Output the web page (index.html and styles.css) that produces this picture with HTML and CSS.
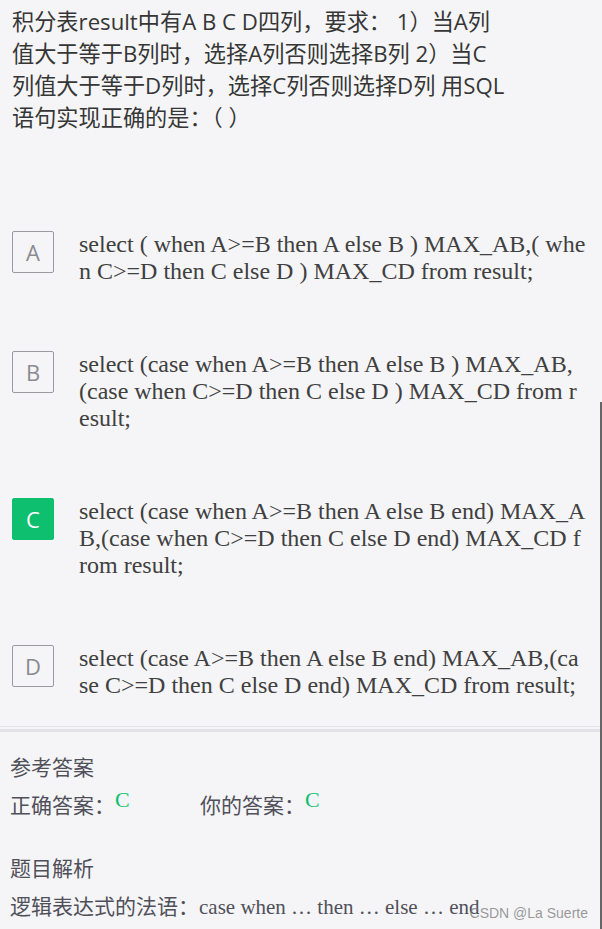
FILE: index.html
```html
<!DOCTYPE html>
<html lang="zh">
<head>
<meta charset="utf-8">
<link rel="stylesheet" href="styles.css">
</head>
<body>
<div class="page">
  <div class="question">积分表result中有A B C D四列，要求： 1）当A列<br>值大于等于B列时，选择A列否则选择B列 2）当C<br>列值大于等于D列时，选择C列否则选择D列 用SQL<br>语句实现正确的是：（ ）</div>
  <div class="options">
    <div class="option">
      <div class="letter">A</div>
      <div class="otext">select ( when A&gt;=B then A else B ) MAX_AB,( when C&gt;=D then C else D ) MAX_CD from result;</div>
    </div>
    <div class="option">
      <div class="letter">B</div>
      <div class="otext">select (case when A&gt;=B then A else B ) MAX_AB,(case when C&gt;=D then C else D ) MAX_CD from result;</div>
    </div>
    <div class="option">
      <div class="letter letter-on">C</div>
      <div class="otext">select (case when A&gt;=B then A else B end) MAX_AB,(case when C&gt;=D then C else D end) MAX_CD from result;</div>
    </div>
    <div class="option">
      <div class="letter">D</div>
      <div class="otext">select (case A&gt;=B then A else B end) MAX_AB,(case C&gt;=D then C else D end) MAX_CD from result;</div>
    </div>
  </div>
  <div class="divider"></div>
  <div class="answer">
    <div class="title">参考答案</div>
    <div class="row">
      <span class="pair">正确答案：<span class="ans">C</span></span>
      <span class="pair">你的答案：<span class="ans">C</span></span>
    </div>
    <div class="title title-gap">题目解析</div>
    <div class="row">逻辑表达式的法语：<span class="serif">case when … then … else … end</span></div>
  </div>
  <div class="watermark">CSDN @La Suerte</div>
  <div class="scrollbar"></div>
</div>
</body>
</html>
```

FILE: styles.css
```css
html, body {
  margin: 0;
  padding: 0;
  background: #f5f5f7;
}
body {
  font-family: "Noto Sans CJK SC", "Noto Sans", sans-serif;
  color: #333;
  overflow: hidden;
}
.page {
  position: relative;
  width: 602px;
  height: 929px;
  overflow: hidden;
}
.question {
  padding: 6px 0 0 12px;
  width: 580px;
  font-family: "Open Sans", "Noto Sans CJK SC", sans-serif;
  font-size: 22.2px;
  line-height: 32px;
  color: #363636;
  white-space: nowrap;
}
.options {
  padding-top: 97px;
  display: flex;
  flex-direction: column;
  gap: 66px;
}
.option {
  display: flex;
  align-items: flex-start;
  padding-left: 12px;
}
.letter {
  flex: none;
  width: 40px;
  height: 40px;
  border: 1px solid #9a9aa0;
  border-radius: 2px;
  display: flex;
  align-items: center;
  justify-content: center;
  font-family: "Open Sans", "Noto Sans", sans-serif;
  font-size: 22px;
  color: #8a8a90;
  box-sizing: content-box;
}
.letter-on {
  background: #0dbf6e;
  border-color: #0dbf6e;
  color: #fff;
}
.otext {
  margin-left: 25px;
  width: 508px;
  font-family: "Liberation Serif", "Times New Roman", serif;
  font-size: 24px;
  line-height: 27px;
  color: #404040;
  word-break: break-all;
  margin-top: 0;
}
.divider {
  margin-top: 27px;
  height: 1px;
  background: #e2e2e8;
  border-bottom: 2px solid #f5f5f7;
  box-shadow: 0 3px 0 #e2e2e8;
}
.answer {
  padding: 18px 12px 0 10px;
  font-size: 21px;
  color: #50505a;
  line-height: 38px;
}
.title-gap {
  margin-top: 23px;
}
.row {
  display: flex;
  align-items: baseline;
}
.pair {
  width: 190px;
}
.ans {
  font-family: "Liberation Serif", "Times New Roman", serif;
  font-size: 22px;
  color: #0dbf6e;
  position: relative;
  top: -6px;
}
.serif {
  font-family: "Liberation Serif", "Times New Roman", serif;
  font-size: 21px;
}
.watermark {
  position: absolute;
  right: 14px;
  bottom: 8px;
  font-family: "Liberation Sans", Arial, sans-serif;
  font-size: 14px;
  color: rgba(120, 120, 120, 0.75);
}
.scrollbar {
  position: absolute;
  left: 600px;
  top: 402px;
  width: 2px;
  bottom: 0;
  background: #666;
}
```
